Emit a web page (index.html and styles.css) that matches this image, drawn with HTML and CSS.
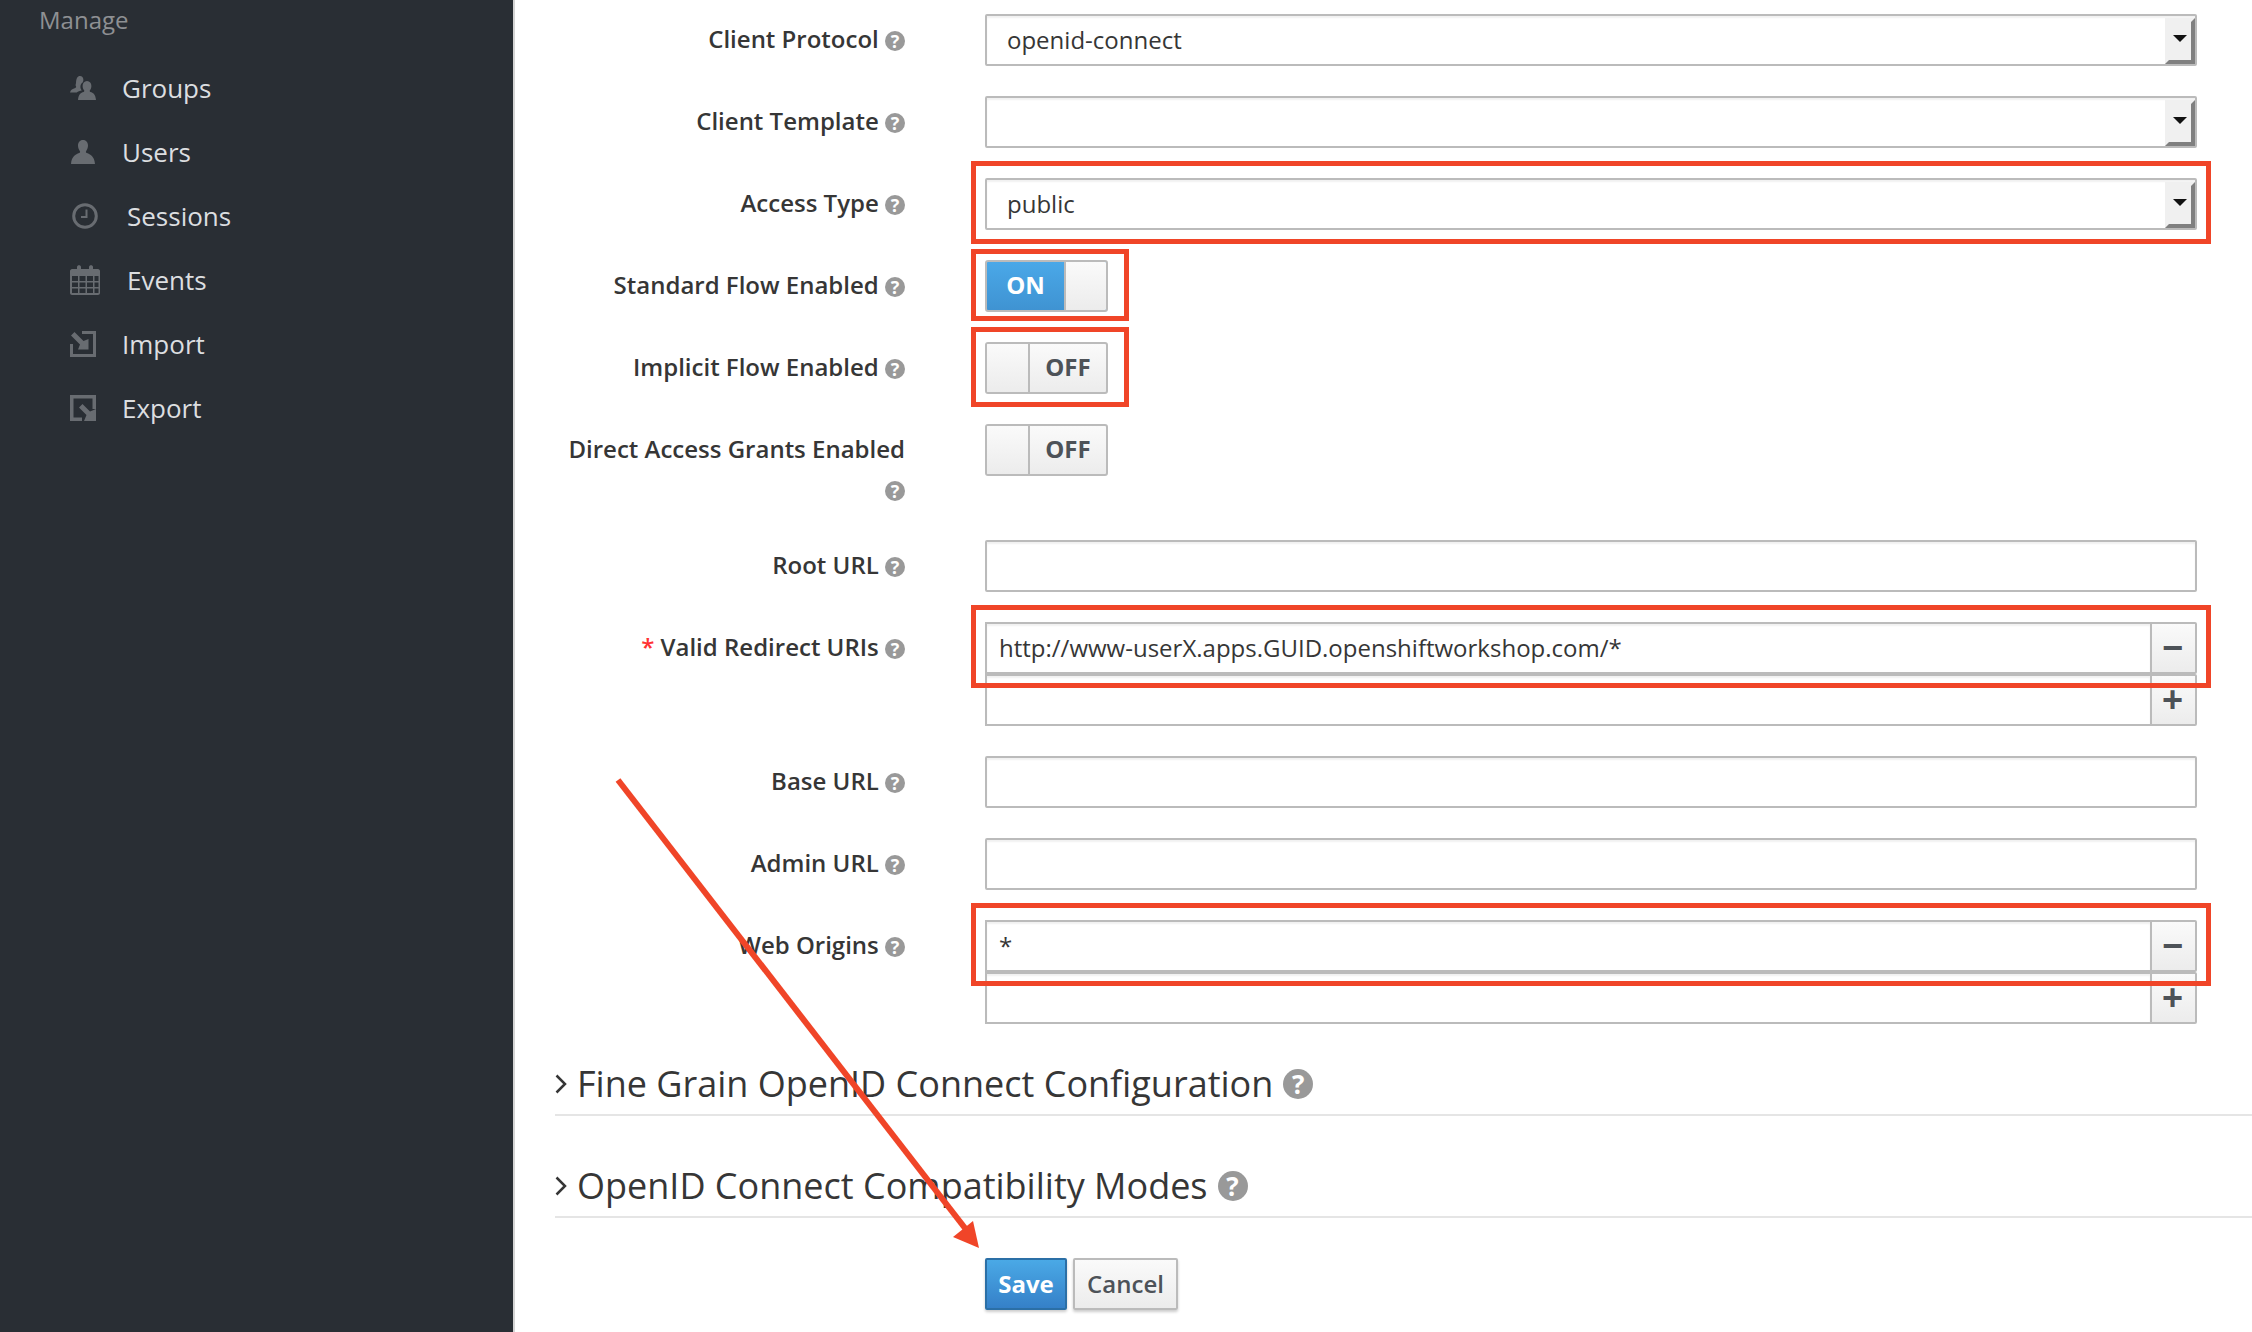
FILE: index.html
```html
<!DOCTYPE html>
<html lang="en">
  <head>
    <meta charset="UTF-8" />
    <meta name="viewport" content="width=device-width, initial-scale=1.0" />
    <title>Client settings</title>
    <link rel="stylesheet" href="styles.css">
  </head>
  <body>
    <aside class="sidebar">
      <div class="side-title">Manage</div>
      <a class="nav-item">
        <svg class="nav-icon" viewBox="0 0 26 24"><path d="M10 0c2 0 3.400 1.600 3.400 3.800 0 1-.3 1.900-.8 2.600-1.300.8-2.200 2.500-2.200 4.400 0 1.400.5 2.700 1.300 3.600-2 .4-3.600 1-5 2H0c.5-2.600 2.700-3.700 5.300-4.500.7-.3 1-.9.7-1.600C5.200 9.200 5.800 8.400 6 7 6.200 2.500 7.500 0 10 0z"/><path d="M17 5c2.800 0 4.400 2.200 4.400 5 0 1.800-.7 3.300-1.500 4.300-.4.700-.2 1.400.6 1.800 2.500.9 4.900 2.100 5.500 7.900H8c.6-5.800 3-7 5.500-7.900.8-.4 1-1.100.6-1.800-.8-1-1.500-2.500-1.500-4.300 0-2.800 1.600-5 4.400-5z"/></svg>
        <span>Groups</span>
      </a>
      <a class="nav-item">
        <svg class="nav-icon" viewBox="0 0 26 24"><path d="M13 0c3.300 0 5 2.500 5 5.600 0 2.200-.8 4-1.800 5.300-.6.900-.3 1.700.7 2.200 3.400 1.500 7.400 3 8.100 10.900H1c.7-7.900 4.700-9.400 8.100-10.900 1-.5 1.300-1.300.7-2.200C8.800 9.600 8 7.800 8 5.600 8 2.500 9.700 0 13 0z"/></svg>
        <span>Users</span>
      </a>
      <a class="nav-item">
        <svg class="nav-icon wide" viewBox="0 0 30 26"><circle cx="15" cy="13" r="11.300" fill="none" stroke-width="3"/><path d="M15.500 6.500h2v8.500h-6.500v-2h4.500z"/></svg>
        <span>Sessions</span>
      </a>
      <a class="nav-item">
        <svg class="nav-icon wide tall" viewBox="0 0 30 30"><path fill-rule="evenodd" d="M2 4h5V2c0-2.500 4-2.500 4 0v2h8V2c0-2.500 4-2.500 4 0v2h5c1 0 2 1 2 2v22c0 1-1 2-2 2H2c-1 0-2-1-2-2V6c0-1 1-2 2-2zm0 7v5h6v-5zm7.500 0v5h6v-5zm7.500 0v5h6v-5zm7.500 0v5h4v-5zM2 17.500v4.500h6v-4.500zm7.500 0v4.500h6v-4.500zm7.500 0v4.500h6v-4.500zm7.500 0v4.500h4v-4.500zM2 23.500V28h6v-4.500zm7.500 0V28h6v-4.500zm7.500 0V28h6v-4.500zm7.500 0V28h4v-4.500z"/></svg>
        <span>Events</span>
      </a>
      <a class="nav-item">
        <svg class="nav-icon" viewBox="0 0 26 26"><path d="M12 0h14v26H0V13h3v10h20V3H12z"/><path d="M4.500 1L1 4.500 10 13.500 8 18.500H18.500V8L13.500 10z"/></svg>
        <span>Import</span>
      </a>
      <a class="nav-item">
        <svg class="nav-icon" viewBox="0 0 26 26"><path d="M0 0h26v14h-3.500V3.500h-19v19H12V26H0z"/><path d="M9 12.500L12.500 9 20 16.500 26 14V26H14L16.500 20z"/></svg>
        <span>Export</span>
      </a>
    </aside>

    <main class="content">
      <form class="client-form">
        <div class="row">
          <label class="lbl">Client Protocol <i class="help">?</i></label>
          <div class="select"><span class="select-val">openid-connect</span><b class="select-btn"></b></div>
        </div>
        <div class="row">
          <label class="lbl">Client Template <i class="help">?</i></label>
          <div class="select"><span class="select-val"></span><b class="select-btn"></b></div>
        </div>
        <div class="row">
          <label class="lbl">Access Type <i class="help">?</i></label>
          <div class="field">
            <div class="select"><span class="select-val">public</span><b class="select-btn"></b></div>
            <div class="mark mark-wide"></div>
          </div>
        </div>
        <div class="row">
          <label class="lbl">Standard Flow Enabled <i class="help">?</i></label>
          <div class="field">
            <div class="toggle on"><span class="toggle-txt">ON</span><span class="knob"></span></div>
            <div class="mark mark-on"></div>
          </div>
        </div>
        <div class="row">
          <label class="lbl">Implicit Flow Enabled <i class="help">?</i></label>
          <div class="field">
            <div class="toggle"><span class="knob"></span><span class="toggle-txt">OFF</span></div>
            <div class="mark mark-off"></div>
          </div>
        </div>
        <div class="row">
          <label class="lbl">Direct Access Grants Enabled <i class="help">?</i></label>
          <div class="toggle"><span class="knob"></span><span class="toggle-txt">OFF</span></div>
        </div>
        <div class="row">
          <label class="lbl">Root URL <i class="help">?</i></label>
          <input class="text-in" type="text">
        </div>
        <div class="row">
          <label class="lbl"><em class="req">*</em> Valid Redirect URIs <i class="help">?</i></label>
          <div class="field">
            <div class="multi"><input class="text-in" type="text" value="http://www-userX.apps.GUID.openshiftworkshop.com/*"><button class="side-btn" type="button">&minus;</button></div>
            <div class="multi"><input class="text-in" type="text"><button class="side-btn" type="button">+</button></div>
            <div class="mark mark-multi"></div>
          </div>
        </div>
        <div class="row">
          <label class="lbl">Base URL <i class="help">?</i></label>
          <input class="text-in" type="text">
        </div>
        <div class="row">
          <label class="lbl">Admin URL <i class="help">?</i></label>
          <input class="text-in" type="text">
        </div>
        <div class="row">
          <label class="lbl">Web Origins <i class="help">?</i></label>
          <div class="field">
            <div class="multi"><input class="text-in" type="text" value="*"><button class="side-btn" type="button">&minus;</button></div>
            <div class="multi"><input class="text-in" type="text"><button class="side-btn" type="button">+</button></div>
            <div class="mark mark-multi"></div>
          </div>
        </div>

        <div class="section">
          <svg class="chev" viewBox="0 0 12 20"><path d="M1.500 1.500L10 10l-8.500 8.500"/></svg>
          <span>Fine Grain OpenID Connect Configuration</span>
          <i class="help big">?</i>
        </div>
        <div class="section">
          <svg class="chev" viewBox="0 0 12 20"><path d="M1.500 1.500L10 10l-8.500 8.500"/></svg>
          <span>OpenID Connect Compatibility Modes</span>
          <i class="help big">?</i>
        </div>

        <div class="actions">
          <button class="btn btn-save" type="button">Save</button>
          <button class="btn btn-cancel" type="button">Cancel</button>
        </div>
      </form>
    </main>

    <!-- annotation arrow drawn over the form -->
    <svg class="arrow" viewBox="0 0 2252 1332">
      <path d="M618 780L968 1232" stroke="#f04528" stroke-width="6" fill="none"/>
      <path d="M979 1248L953 1237L973 1221z" fill="#f04528"/>
    </svg>
  </body>
</html>
```

FILE: styles.css
```css
* {
  box-sizing: border-box;
}

html, body {
  margin: 0;
  height: 1332px;
  overflow: hidden;
}

body {
  display: flex;
  position: relative;
  background: #fff;
  font-family: "Open Sans", "Noto Sans", sans-serif;
  font-size: 24px;
  color: #363636;
}

/* sidebar */
.sidebar {
  width: 515px;
  flex: none;
  background: #292e34;
  border-right: 2px solid #d4d4d4;
}

.side-title {
  height: 40px;
  line-height: 40px;
  margin-bottom: 16px;
  padding-left: 39px;
  color: #8e9093;
  font-size: 24px;
}

.nav-item {
  display: flex;
  align-items: center;
  height: 64px;
  padding-left: 70px;
  color: #dcdee0;
  font-size: 26px;
}

.nav-item span {
  margin-top: -1px;
}

.nav-icon {
  width: 26px;
  height: 26px;
  margin-right: 26px;
  fill: #686c71;
  stroke: #686c71;
  stroke-width: 0;
  flex: none;
}

.nav-icon.wide {
  width: 30px;
  margin-right: 27px;
}

.nav-icon.tall {
  height: 30px;
}

/* form */
.content {
  flex: 1;
  padding-left: 40px;
}

.client-form {
  padding-top: 14px;
}

.row {
  display: grid;
  grid-template-columns: 350px 1fr;
  column-gap: 80px;
  margin-right: 55px;
  margin-bottom: 30px;
}

.lbl {
  display: block;
  padding: 5px 0 1px;
  line-height: 40px;
  text-align: right;
  font-weight: 600;
  color: #363636;
}

.req {
  color: #f33;
  font-style: normal;
}

.help {
  display: inline-block;
  width: 20px;
  height: 20px;
  border-radius: 50%;
  background: #999;
  color: #fff;
  font-style: normal;
  font-weight: 700;
  font-size: 18px;
  line-height: 20px;
  text-align: center;
  vertical-align: 0;
}

.help.big {
  width: 30px;
  height: 30px;
  margin-left: 10px;
  font-size: 26px;
  line-height: 30px;
}

.field {
  position: relative;
}

.text-in {
  display: block;
  width: 100%;
  height: 52px;
  padding: 0 12px 2px;
  border: 2px solid #bbb;
  border-radius: 2px;
  background: #fff;
  box-shadow: inset 0 2px 2px rgba(0, 0, 0, .06);
  font-family: inherit;
  font-size: 24px;
  color: #363636;
  outline: none;
}

.select {
  display: flex;
  justify-content: space-between;
  height: 52px;
  border: 2px solid #bbb;
  border-radius: 2px;
  box-shadow: inset 0 2px 2px rgba(0, 0, 0, .06);
  background: #fff;
}

.select-val {
  padding-left: 20px;
  line-height: 47px;
}

.select-btn {
  position: relative;
  width: 30px;
  margin-top: 2px;
  border: 4px solid;
  border-color: #f0f0f0 #808080 #808080 #f0f0f0;
  background: #f0f0f0;
}

.select-btn::after {
  content: "";
  position: absolute;
  left: 4px;
  top: 13px;
  border-style: solid;
  border-width: 7px 7px 0;
  border-color: #111 transparent transparent;
}

.toggle {
  display: flex;
  width: 123px;
  height: 52px;
  border: 2px solid #bbb;
  border-radius: 3px;
  background: linear-gradient(#fafafa, #ececec);
  overflow: hidden;
  font-weight: 700;
  color: #4d5258;
}

.toggle-txt {
  flex: 1;
  line-height: 46px;
  text-align: center;
}

.knob {
  width: 43px;
  flex: none;
  background: linear-gradient(#fafafa, #ececec);
  border-right: 2px solid #bbb;
}

.toggle.on {
  background: linear-gradient(#4aa8e8, #3f93d2);
  color: #fff;
}

.toggle.on .knob {
  width: 42px;
  border-right: 0;
  border-left: 2px solid #bbb;
}

.multi {
  display: flex;
}

.multi .text-in {
  flex: 1;
  border-right: 0;
  border-radius: 0;
}

.side-btn {
  width: 47px;
  height: 52px;
  padding: 0 2px 0 0;
  border: 2px solid #bbb;
  border-radius: 0 2px 2px 0;
  background: linear-gradient(#fafafa, #ececec);
  font-family: "Liberation Sans", sans-serif;
  font-size: 36px;
  font-weight: 700;
  line-height: 44px;
  color: #4d5258;
}

/* red annotation boxes */
.mark {
  position: absolute;
  border: 5px solid #f04528;
  pointer-events: none;
}

.mark-wide {
  inset: -17px -14px -14px -14px;
}

.mark-on {
  top: -11px;
  bottom: -9px;
  left: -14px;
  width: 158px;
}

.mark-off {
  top: -15px;
  bottom: -13px;
  left: -14px;
  width: 158px;
}

.mark-multi {
  top: -17px;
  left: -14px;
  right: -14px;
  height: 83px;
}

/* collapsed sections */
.section {
  display: flex;
  align-items: center;
  height: 62px;
  margin-bottom: 40px;
  border-bottom: 2px solid #e5e5e5;
  font-size: 36px;
  color: #363636;
}

.section span {
  margin-top: -2px;
}

.chev {
  width: 12px;
  height: 20px;
  margin-right: 10px;
  fill: none;
  stroke: #363636;
  stroke-width: 2.500;
  flex: none;
}

.actions {
  display: flex;
  gap: 6px;
  margin-left: 430px;
}

.btn {
  height: 52px;
  padding: 0 0 2px;
  border: 2px solid;
  border-radius: 2px;
  box-shadow: 0 2px 3px rgba(0, 0, 0, .2);
  font-family: inherit;
  font-size: 24px;
}

.btn-save {
  width: 82px;
  border-color: #2b6fa6;
  background: linear-gradient(#4aa9e6, #3580c8);
  color: #fff;
  font-weight: 700;
}

.btn-cancel {
  width: 105px;
  border-color: #bbb;
  background: linear-gradient(#fafafa, #ececec);
  color: #4d5258;
  font-weight: 600;
}

.arrow {
  position: absolute;
  left: 0;
  top: 0;
  width: 2252px;
  height: 1332px;
  pointer-events: none;
}
```
